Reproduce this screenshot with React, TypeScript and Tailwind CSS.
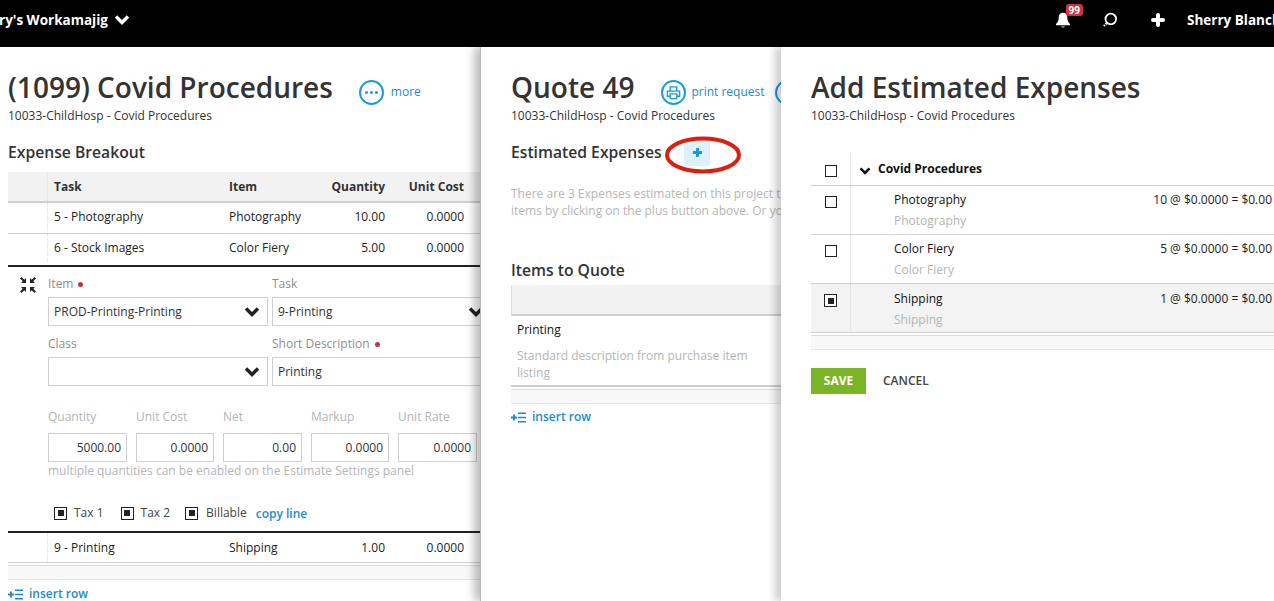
import React from 'react';

const Chevron = ({ className }: { className: string }) => (
  <svg viewBox="0 0 16 12" className={className} fill="none" stroke="currentColor" strokeWidth="3.4">
    <path d="M2 2.5 8 8.5l6-6" />
  </svg>
);

const Check = ({ on, className = '' }: { on?: boolean; className?: string }) => (
  <span className={`flex shrink-0 items-center justify-center border border-[#222] bg-white ${on ? 'h-[13px] w-[13px]' : 'h-[12px] w-[12px]'} ${className}`}>
    {on && <span className="h-[6px] w-[6px] bg-[#222]" />}
  </span>
);

const InsertRow = () => (
  <div className="flex items-center gap-[6px] text-[12px] font-semibold text-[#1b8ccb]">
    <svg viewBox="0 0 15 11" className="h-[11px] w-[15px]" fill="none" stroke="currentColor">
      <path d="M7 1.200h8M7 5.500h8M7 9.800h8" strokeWidth="1.600" />
      <path d="M0 5.500h6M3 2.500v6" strokeWidth="1.800" />
    </svg>
    insert row
  </div>
);

const CircleIcon = ({ children, className = '' }: { children: React.ReactNode; className?: string }) => (
  <span className={`flex h-[25px] w-[25px] shrink-0 items-center justify-center rounded-full border-2 border-[#1b9ad6] text-[#1b9ad6] ${className}`}>
    {children}
  </span>
);

const Band = () => <div className="mt-[2px] h-[15px] border-y border-t-[#dcdcdc] border-b-[#e8e8e8] bg-[#f8f8f8]" />;

const cols = 'grid grid-cols-[40px_175px_104px_64px_79px_1fr]';

const ExpenseRow = ({ task, item, qty, cost, last, height = 'h-[31px] pb-[2px]' }: { task: string; item: string; qty: string; cost: string; last?: boolean; height?: string }) => (
  <div className={`${cols} ${height} items-center text-[12px] text-[#222] ${last ? '' : 'border-b border-[#cfcfcf]'}`}>
    <div className="h-full border-r border-dotted border-[#ddd]" />
    <div className="pl-[6px]">{task}</div>
    <div className="pl-[6px]">{item}</div>
    <div className="pr-[6px] text-right">{qty}</div>
    <div className="pr-[6px] text-right">{cost}</div>
  </div>
);

const Field = ({ label, req, children }: { label: string; req?: boolean; children: React.ReactNode }) => (
  <div>
    <div className="flex h-[26px] items-center gap-[5px] text-[12px] text-[#8f8f8f]">
      {label}
      {req && <span className="h-[5px] w-[5px] rounded-full bg-[#c4343a]" />}
    </div>
    {children}
  </div>
);

const Box = ({ text, chevron }: { text: string; chevron?: boolean }) => (
  <div className="flex h-[29px] items-center justify-between border border-[#cfcfcf] bg-white pl-[5px] pr-[7px] text-[12px] text-[#333]">
    <span>{text}</span>
    {chevron && <Chevron className="h-[12px] w-[16px] text-[#222]" />}
  </div>
);

const Num = ({ label, value, className }: { label: string; value: string; className: string }) => (
  <div className={className}>
    <div className="h-[19px] text-[12px] leading-[19px] text-[#b5b5b5]">{label}</div>
    <div className="mt-[7px] flex h-[29px] items-center justify-end border border-[#cfcfcf] pr-[5px] text-[12px] text-[#333]">{value}</div>
  </div>
);

const PickRow = ({ name, calc, on }: { name: string; calc: string; on?: boolean }) => (
  <div className={`grid h-[49px] grid-cols-[40px_1fr] border-b border-[#cfcfcf] text-[12px] ${on ? 'bg-[#f3f3f3]' : ''}`}>
    <div className="flex justify-center border-r border-dotted border-[#ddd] pt-[10px]">
      <Check on={on} />
    </div>
    <div className={`relative pl-[43px] text-[#111] ${on ? 'pt-[6px]' : 'pt-[5px]'}`}>
      <div className="leading-[17px]">{name}</div>
      <div className="mt-[4px] leading-[17px] text-[#b5b5b5]">{name}</div>
      <div className={`absolute right-[2px] leading-[17px] text-[#222] ${on ? 'top-[6px]' : 'top-[5px]'}`}>{calc}</div>
    </div>
  </div>
);

export default function App() {
  return (
    <div className="flex h-[601px] w-[1274px] flex-col overflow-hidden bg-white font-['Open_Sans',sans-serif]">
      <header className="flex h-[47px] shrink-0 items-center justify-between bg-black pb-[7px] text-[13.5px] font-bold text-white">
        <div className="flex items-center gap-[6px]">
          <span className="-ml-[1px]">ry's Workamajig</span>
          <Chevron className="mt-[-1px] h-[12px] w-[16px]" />
        </div>
        <div className="flex items-center">
          <span className="relative mr-[31px]">
            <svg viewBox="0 0 16 16" className="h-[16px] w-[16px]" fill="currentColor">
              <path d="M8 0.8c-2.7 0-4.3 2-4.3 4.6 0 3-.9 5-2.7 6.6v1.2h14V12c-1.8-1.6-2.7-3.6-2.7-6.6C12.300 2.800 10.700.800 8 .800ZM6 14.400a2.100 1.600 0 0 0 4 0Z" />
            </svg>
            <span className="absolute -right-[12px] -top-[8px] rounded-[3px] bg-[#d0323f] px-[3px] text-[10px] leading-[12px]">99</span>
          </span>
          <svg viewBox="0 0 16 16" className="mr-[32px] h-[16px] w-[16px]" fill="none" stroke="currentColor">
            <circle cx="8.800" cy="7" r="5.300" strokeWidth="1.800" />
            <path d="M4.500 11.200 2 14" strokeWidth="2.200" strokeDasharray="1.500 1" />
          </svg>
          <svg viewBox="0 0 16 16" className="mr-[21px] h-[16px] w-[16px]" fill="none" stroke="currentColor" strokeWidth="4" strokeLinecap="round">
            <path d="M8 3v10M3 8h10" />
          </svg>
          <span className="w-[87px] overflow-hidden whitespace-nowrap">Sherry Blanchard</span>
        </div>
      </header>

      <div className="flex min-h-0 flex-1">
        <section className="w-[480px] shrink-0 overflow-hidden pl-[8px]">
          <div className="flex items-center pt-[21px]">
            <h1 className="text-[28px] font-semibold leading-[38px] text-[#333]">(1099) Covid Procedures</h1>
            <CircleIcon className="ml-[26px] mt-[10px]">
              <span className="flex gap-[2px]">
                <span className="h-[3px] w-[3px] rounded-full bg-[#1b9ad6]" />
                <span className="h-[3px] w-[3px] rounded-full bg-[#1b9ad6]" />
                <span className="h-[3px] w-[3px] rounded-full bg-[#1b9ad6]" />
              </span>
            </CircleIcon>
            <span className="ml-[7px] mt-[10px] text-[12px] text-[#1b8ccb]">more</span>
          </div>
          <p className="mt-[1px] text-[12px] leading-[17px] text-[#333]">10033-ChildHosp - Covid Procedures</p>
          <h2 className="mt-[18px] text-[15.7px] font-semibold leading-[20px] text-[#333]">Expense Breakout</h2>
          <div className={`${cols} mt-[10px] h-[31px] items-center border-b-2 border-[#cfcfcf] bg-[#f2f2f2] text-[12px] font-bold text-[#333]`}>
            <div className="h-full border-r border-dotted border-[#ddd]" />
            <div className="pl-[6px]">Task</div>
            <div className="pl-[6px]">Item</div>
            <div className="pr-[6px] text-right">Quantity</div>
            <div className="pr-[6px] text-right">Unit Cost</div>
          </div>
          <ExpenseRow task="5 - Photography" item="Photography" qty="10.00" cost="0.0000" />
          <ExpenseRow task="6 - Stock Images" item="Color Fiery" qty="5.00" cost="0.0000" last height="h-[31px] pb-[3px]" />

          <div className="flex h-[268px] border-y-2 border-[#222]">
            <div className="w-[40px] shrink-0 pl-[12px] pt-[10px]">
              <svg viewBox="0 0 16 16" className="h-[16px] w-[16px] text-[#222]" fill="currentColor">
                <path d="M1.500 0 0 1.500 2.800 4.300 1 6h5V1L4.300 2.800ZM14.500 0 16 1.500 13.200 4.300 15 6h-5V1l1.700 1.800ZM1.500 16 0 14.500 2.800 11.700 1 10h5v5L4.300 13.200ZM14.500 16 16 14.500 13.200 11.700 15 10h-5v5l1.700-1.800Z" />
              </svg>
            </div>
            <div className="min-w-0 flex-1">
              <div className="grid grid-cols-[220px_220px] gap-x-[4px] gap-y-[5px] pt-[4px]">
                <Field label="Item" req>
                  <Box text="PROD-Printing-Printing" chevron />
                </Field>
                <Field label="Task">
                  <Box text="9-Printing" chevron />
                </Field>
                <Field label="Class">
                  <Box text="" chevron />
                </Field>
                <Field label="Short Description" req>
                  <Box text="Printing" />
                </Field>
              </div>
              <div className="mt-[21px] flex">
                <Num label="Quantity" value="5000.00" className="mr-[9px] w-[79px]" />
                <Num label="Unit Cost" value="0.0000" className="mr-[9px] w-[78px]" />
                <Num label="Net" value="0.00" className="mr-[9px] w-[79px]" />
                <Num label="Markup" value="0.0000" className="mr-[9px] w-[78px]" />
                <Num label="Unit Rate" value="0.0000" className="w-[79px]" />
              </div>
              <p className="text-[12px] leading-[17px] text-[#b5b5b5]">multiple quantities can be enabled on the Estimate Settings panel</p>
              <div className="mt-[24px] flex items-center pl-[6px] text-[12px] text-[#444]">
                <Check on className="mr-[7px]" />
                <span className="mr-[17px]">Tax 1</span>
                <Check on className="mr-[7px]" />
                <span className="mr-[15px]">Tax 2</span>
                <Check on className="mr-[8px]" />
                <span className="mr-[9px]">Billable</span>
                <span className="mt-[2px] font-semibold text-[#1b8ccb]">copy line</span>
              </div>
            </div>
          </div>
          <ExpenseRow task="9 - Printing" item="Shipping" qty="1.00" cost="0.0000" height="h-[30px]" />
          <Band />
          <div className="mt-[5px]">
            <InsertRow />
          </div>
        </section>

        <section className="relative z-10 w-[301px] shrink-0 overflow-hidden border-l border-[#bbb] bg-white pl-[30px] shadow-[-6px_0_8px_rgba(0,0,0,0.25)]">
          <div className="flex items-center whitespace-nowrap pt-[21px]">
            <h1 className="text-[28px] font-semibold leading-[38px] text-[#333]">Quote 49</h1>
            <CircleIcon className="ml-[27px] mt-[10px]">
              <svg viewBox="0 0 16 16" className="h-[15px] w-[15px]" fill="none" stroke="currentColor" strokeWidth="1.500">
                <path d="M4.500 6V2h7v4M4 12H1.500V6.500h13V12H12M4.500 9.500h7v5h-7z" />
              </svg>
            </CircleIcon>
            <span className="ml-[5px] mt-[10px] text-[12px] text-[#1b8ccb]">print request</span>
            <CircleIcon className="ml-[10px] mt-[10px]">
              <span className="h-[3px] w-[3px] rounded-full bg-[#1b9ad6]" />
            </CircleIcon>
          </div>
          <p className="mt-[1px] text-[12px] leading-[17px] text-[#333]">10033-ChildHosp - Covid Procedures</p>
          <div className="relative mt-[15px] flex h-[26px] items-center">
            <h2 className="w-[173px] shrink-0 text-[15.7px] font-semibold leading-[20px] text-[#333]">Estimated Expenses</h2>
            <span className="mt-[2px] flex h-[26px] w-[26px] items-center justify-center rounded-[2px] bg-[#def0fa] pb-[2px] text-[#1b9ad6]">
              <svg viewBox="0 0 12 12" className="h-[11px] w-[11px]" fill="none" stroke="currentColor" strokeWidth="3.200">
                <path d="M6 1v10M1 6h10" />
              </svg>
            </span>
            <svg viewBox="0 0 78 38" className="absolute left-[153px] top-[-3px] h-[38px] w-[78px]" fill="none" stroke="#d9210f" strokeWidth="4">
              <ellipse cx="39" cy="19" rx="36" ry="16.500" />
            </svg>
          </div>
          <div className="mt-[20px] whitespace-nowrap text-[12px] leading-[17px] text-[#b5b5b5]">
            <p>There are 3 Expenses estimated on this project that have not been quoted.</p>
            <p>items by clicking on the plus button above. Or you can add new items.</p>
          </div>
          <h2 className="mt-[41px] text-[15.7px] font-semibold leading-[20px] text-[#333]">Items to Quote</h2>
          <div className="mt-[5px] h-[31px] border-b-2 border-l border-[#cfcfcf] border-l-[#ddd] bg-[#f2f2f2]" />
          <div className="h-[71px] border-b-2 border-[#cfcfcf] pl-[6px] pt-[5px] text-[12px]">
            <div className="leading-[17px] text-[#111]">Printing</div>
            <div className="mt-[9px] w-[250px] leading-[17px] text-[#b5b5b5]">Standard description from purchase item listing</div>
          </div>
          <Band />
          <div className="mt-[4px]">
            <InsertRow />
          </div>
        </section>

        <section className="relative z-20 min-w-0 flex-1 overflow-hidden bg-white pl-[30px] shadow-[-6px_0_8px_rgba(0,0,0,0.2)]">
          <h1 className="pt-[21px] text-[28px] font-semibold leading-[38px] text-[#333]">Add Estimated Expenses</h1>
          <p className="mt-[1px] text-[12px] leading-[17px] text-[#333]">10033-ChildHosp - Covid Procedures</p>
          <div className="mt-[29px] grid h-[33px] grid-cols-[40px_1fr] border-b border-[#cfcfcf]">
            <div className="flex justify-center border-r border-dotted border-[#ddd] pt-[12px]">
              <Check />
            </div>
            <div className="flex items-center gap-[7px] pl-[8px] text-[12px] font-bold text-[#111]">
              <Chevron className="mt-[3px] h-[10px] w-[12px]" />
              Covid Procedures
            </div>
          </div>
          <PickRow name="Photography" calc="10 @ $0.0000 = $0.00" />
          <PickRow name="Color Fiery" calc="5 @ $0.0000 = $0.00" />
          <PickRow name="Shipping" calc="1 @ $0.0000 = $0.00" on />
          <Band />
          <div className="mt-[18px] flex items-center text-[12px] font-semibold">
            <button className="h-[26px] w-[55px] bg-[#7ab526] font-bold text-white">SAVE</button>
            <button className="ml-[17px] text-[#444]">CANCEL</button>
          </div>
        </section>
      </div>
    </div>
  );
}
